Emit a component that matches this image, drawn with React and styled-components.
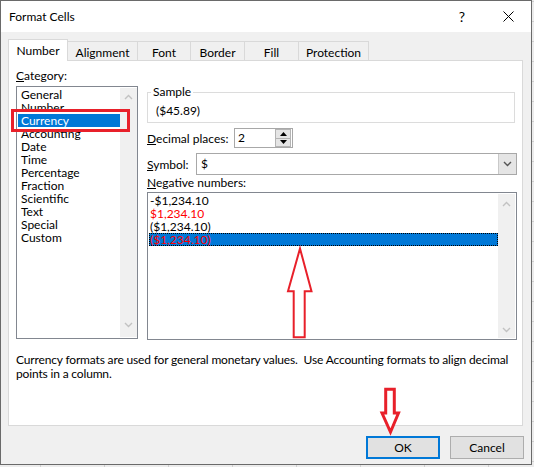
import React from 'react';
import styled, { createGlobalStyle } from 'styled-components';

const Global = createGlobalStyle`
  html, body { margin: 0; padding: 0; }
  body {
    width: 534px;
    height: 467px;
    overflow: hidden;
    background-color: #ececec;
    background-image:
      linear-gradient(to right, #cfcfcf 1px, transparent 1px),
      linear-gradient(to bottom, #cfcfcf 1px, transparent 1px);
    background-size: 64px 20px;
    background-position: 40px 1px;
    font-family: Lato, "Liberation Sans", sans-serif;
    font-size: 12px;
    color: #000;
  }
`;

const Dialog = styled.div`
  position: relative;
  width: 532px;
  height: 465px;
  box-sizing: border-box;
  border: 1px solid #6a6a6a;
  background: #f0f0f0;
  display: flex;
  flex-direction: column;
`;

const TitleBar = styled.div`
  height: 31px;
  flex: none;
  background: #fff;
  display: flex;
  align-items: center;
  padding-left: 8px;
`;

const Title = styled.span`
  flex: 1;
  font-size: 12px;
`;

const CaptionButton = styled.div`
  width: 46px;
  height: 31px;
  display: flex;
  align-items: center;
  justify-content: center;
  font-size: 14px;
`;

const Body = styled.div`
  flex: 1;
  display: flex;
  flex-direction: column;
  padding: 7px 8px 0 7px;
`;

const TabRow = styled.div`
  display: flex;
  align-items: flex-end;
  height: 21px;
  position: relative;
  z-index: 1;
`;

const Tab = styled.div`
  width: ${p => p.$w}px;
  height: ${p => (p.$active ? 22 : 19)}px;
  margin-bottom: ${p => (p.$active ? -1 : 0)}px;
  margin-left: ${p => (p.$first ? 0 : -1)}px;
  box-sizing: border-box;
  border: 1px solid #d9d9d9;
  border-bottom: none;
  background: ${p => (p.$active ? '#fff' : '#f0f0f0')};
  position: relative;
  z-index: ${p => (p.$active ? 2 : 1)};
  display: flex;
  align-items: center;
  justify-content: center;
  padding-top: ${p => (p.$active ? 1 : 2)}px;
  padding-bottom: ${p => (p.$active ? 1 : 0)}px;
`;

const Panel = styled.div`
  height: 366px;
  flex: none;
  box-sizing: border-box;
  background: #fff;
  border: 1px solid #d9d9d9;
  padding: 8px 5px 0 7px;
  display: flex;
  flex-direction: column;
`;

const Columns = styled.div`
  display: grid;
  grid-template-columns: 122px 370px;
  column-gap: 9px;
`;

const Column = styled.div`
  position: relative;
  display: flex;
  flex-direction: column;
`;

const Label = styled.div`
  height: 14px;
  line-height: 14px;
  margin-top: ${p => p.$mt || 0}px;
  white-space: nowrap;
`;

const ListBox = styled.div`
  position: relative;
  height: ${p => p.$h}px;
  margin-top: ${p => p.$mt}px;
  box-sizing: border-box;
  border: 1px solid #828790;
  padding: ${p => p.$pad};
  display: flex;
  background: #fff;
`;

const Items = styled.div`
  flex: 1;
  display: flex;
  flex-direction: column;
`;

const Item = styled.div`
  height: 13px;
  line-height: 13px;
  padding-left: ${p => p.$indent}px;
  white-space: nowrap;
  color: ${p => (p.$red ? '#ff0000' : p.$selected ? '#fff' : '#000')};
  background: ${p => (p.$selected ? '#0078d7' : 'transparent')};
  outline: ${p => (p.$focus ? '1px dotted #000' : 'none')};
  outline-offset: -1px;
`;

const ScrollBar = styled.div`
  width: 17px;
  flex: none;
  background: #f0f0f0;
  display: flex;
  flex-direction: column;
  justify-content: space-between;
  align-items: center;
  padding: ${p => p.$pad};
  box-sizing: border-box;
`;

const Chevron = ({ down, color = '#c2c2c2' }) => (
  <svg width="9" height="6" viewBox="0 0 9 6">
    <polyline
      points={down ? '1,1 4.5,4.5 8,1' : '1,5 4.5,1.5 8,5'}
      fill="none"
      stroke={color}
      strokeWidth="1.4"
    />
  </svg>
);

const Group = styled.fieldset`
  margin: 16px 2px 0 0;
  padding: 4px 8px 4px 8px;
  border: 1px solid #dcdcdc;
  min-width: 0;
`;

const Legend = styled.legend`
  padding: 0 2px;
  margin-left: -5px;
  line-height: 14px;
`;

const FieldRow = styled.div`
  display: flex;
  align-items: center;
  margin-top: ${p => p.$mt}px;
  height: ${p => p.$h}px;
`;

const FieldLabel = styled.label`
  width: ${p => p.$w}px;
  flex: none;
  white-space: nowrap;
`;

const Spin = styled.div`
  width: 59px;
  height: 20px;
  box-sizing: border-box;
  border: 1px solid #a8a8a8;
  display: flex;
  background: #fff;
`;

const SpinValue = styled.div`
  flex: 1;
  line-height: 18px;
  padding-left: 3px;
`;

const SpinButtons = styled.div`
  width: 16px;
  display: flex;
  flex-direction: column;
  margin: 0 1px 0 0;
  padding: 0;
`;

const SpinHalf = styled.div`
  flex: 1;
  box-sizing: border-box;
  background: #e5e5e5;
  border: 1px solid #b4b4b4;
  border-top: ${p => (p.$down ? 'none' : '1px solid #b4b4b4')};
  display: flex;
  align-items: center;
  justify-content: center;
`;

const Triangle = ({ down }) => (
  <svg width="7" height="4" viewBox="0 0 7 4">
    <polygon points={down ? '0,0 7,0 3.5,4' : '0,4 7,4 3.5,0'} fill="#000" />
  </svg>
);

const Combo = styled.div`
  width: 321px;
  height: 22px;
  box-sizing: border-box;
  border: 1px solid #a8a8a8;
  display: flex;
  background: #fff;
`;

const ComboValue = styled.div`
  flex: 1;
  line-height: 20px;
  padding-left: 4px;
`;

const ComboButton = styled.div`
  width: 17px;
  background: #e5e5e5;
  border-left: 1px solid #c9c9c9;
  display: flex;
  align-items: center;
  justify-content: center;
`;

const Description = styled.p`
  margin: 13px 0 0 0;
  line-height: 14px;
  white-space: nowrap;
  letter-spacing: -0.16px;
`;

const ButtonRow = styled.div`
  display: flex;
  justify-content: flex-end;
  gap: 10px;
  margin: 10px -1px 0 0;
`;

const Button = styled.button`
  width: 74px;
  height: 23px;
  box-sizing: border-box;
  padding: 0;
  background: #e1e1e1;
  border: ${p => (p.$default ? '2px solid #0078d7' : '1px solid #adadad')};
  font-family: inherit;
  font-size: 12px;
  color: #000;
`;

const CurrencyMark = styled.div`
  position: absolute;
  left: -5px;
  top: 40px;
  width: 119px;
  height: 23px;
  box-sizing: border-box;
  border: 3px solid #e8202a;
  pointer-events: none;
`;

const UpArrow = styled.svg`
  position: absolute;
  left: 138px;
  top: 53px;
  overflow: visible;
`;

const DownArrow = styled.svg`
  position: absolute;
  left: 377px;
  top: 385px;
  overflow: visible;
`;

const tabs = [
  ['Number', 60],
  ['Alignment', 71],
  ['Font', 54],
  ['Border', 55],
  ['Fill', 55],
  ['Protection', 71],
];

const categories = [
  'General', 'Number', 'Currency', 'Accounting', 'Date', 'Time',
  'Percentage', 'Fraction', 'Scientific', 'Text', 'Special', 'Custom',
];

const negatives = [
  { t: '-$1,234.10' },
  { t: '$1,234.10', red: true },
  { t: '($1,234.10)' },
  { t: '($1,234.10)', red: true, selected: true },
];

export default function App() {
  return (
    <>
      <Global />
      <Dialog>
        <TitleBar>
          <Title>Format Cells</Title>
          <CaptionButton>?</CaptionButton>
          <CaptionButton>
            <svg width="11" height="11" viewBox="0 0 11 11">
              <path d="M0.5 0.5 L10.5 10.5 M10.5 0.5 L0.5 10.5" stroke="#000" strokeWidth="1" />
            </svg>
          </CaptionButton>
        </TitleBar>
        <Body>
          <TabRow>
            {tabs.map(([name, w], i) => (
              <Tab key={name} $w={w} $first={i === 0} $active={i === 0}>
                {name}
              </Tab>
            ))}
          </TabRow>
          <Panel>
            <Columns>
              <Column>
                <Label><u>C</u>ategory:</Label>
                <ListBox $h={253} $mt={3} $pad="1px 0 1px 1px">
                  <Items>
                    {categories.map(c => (
                      <Item key={c} $indent={3} $selected={c === 'Currency'}>
                        {c}
                      </Item>
                    ))}
                  </Items>
                  <ScrollBar $pad="6px 0 9px">
                    <Chevron />
                    <Chevron down />
                  </ScrollBar>
                </ListBox>
                <CurrencyMark />
              </Column>
              <Column>
                <Group>
                  <Legend>Sample</Legend>
                  <div>($45.89)</div>
                </Group>
                <FieldRow $mt={5} $h={20}>
                  <FieldLabel $w={87}><u>D</u>ecimal places:</FieldLabel>
                  <Spin>
                    <SpinValue>2</SpinValue>
                    <SpinButtons>
                      <SpinHalf><Triangle /></SpinHalf>
                      <SpinHalf $down><Triangle down /></SpinHalf>
                    </SpinButtons>
                  </Spin>
                </FieldRow>
                <FieldRow $mt={5} $h={22}>
                  <FieldLabel $w={49}><u>S</u>ymbol:</FieldLabel>
                  <Combo>
                    <ComboValue>$</ComboValue>
                    <ComboButton><Chevron down color="#555" /></ComboButton>
                  </Combo>
                </FieldRow>
                <Label $mt={1}><u>N</u>egative numbers:</Label>
                <ListBox $h={148} $mt={2} $pad="1px 1px 1px 1px">
                  <Items>
                    {negatives.map((n, i) => (
                      <Item key={i} $indent={1} $red={n.red} $selected={n.selected} $focus={n.selected}>
                        {n.t}
                      </Item>
                    ))}
                  </Items>
                  <ScrollBar $pad="7px 0 5px">
                    <Chevron />
                    <Chevron down />
                  </ScrollBar>
                  <UpArrow width="30" height="95" viewBox="0 0 30 95">
                    <polygon
                      points="14,2.5 25.5,45.3 18.7,45.3 18.7,91.3 7.7,91.3 7.7,45.3 2,45.3"
                      fill="none"
                      stroke="#e8202a"
                      strokeWidth="2"
                    />
                  </UpArrow>
                </ListBox>
              </Column>
            </Columns>
            <Description>
              Currency formats are used for general monetary values.&nbsp; Use Accounting formats to align decimal
              <br />
              points in a column.
            </Description>
          </Panel>
          <ButtonRow>
            <Button $default>OK</Button>
            <Button>Cancel</Button>
          </ButtonRow>
        </Body>
        <DownArrow width="24" height="50" viewBox="0 0 24 50">
          <polygon
            points="7.7,3.2 16.3,3.2 16.3,27 20.5,27 12.5,46 4,27 7.7,27"
            fill="#fff"
            stroke="#e8202a"
            strokeWidth="3"
          />
        </DownArrow>
      </Dialog>
    </>
  );
}
